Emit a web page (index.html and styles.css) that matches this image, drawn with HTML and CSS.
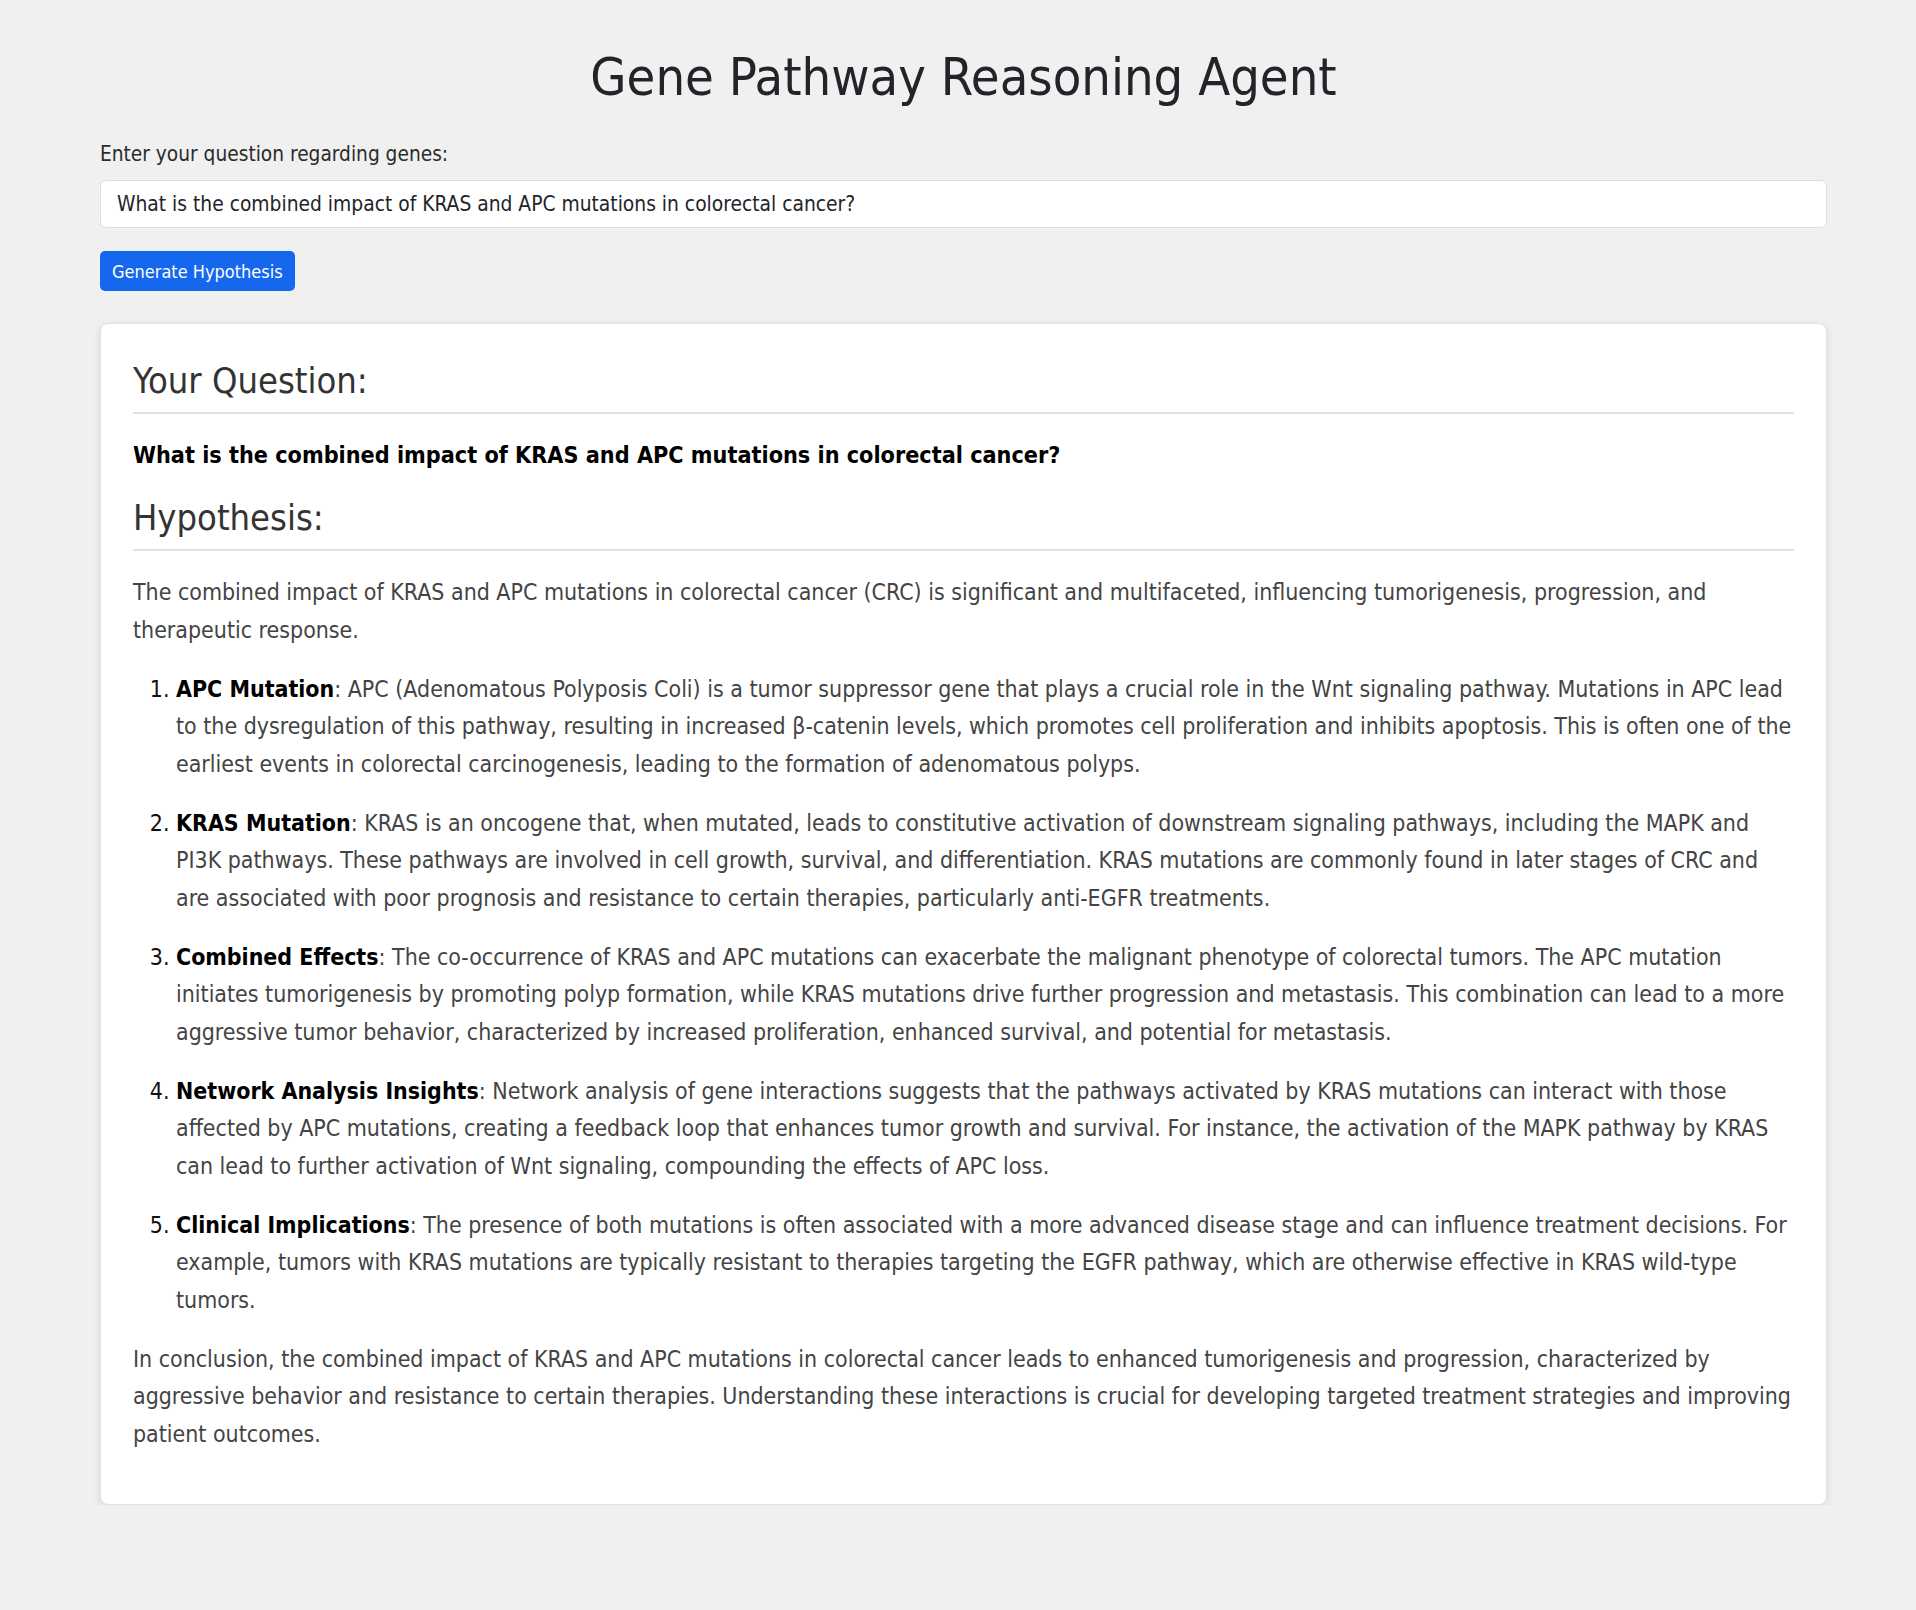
FILE: index.html
```html
<!DOCTYPE html>
<html lang="en">
<head>
<meta charset="utf-8">
<title>Gene Pathway Reasoning Agent</title>
<link rel="stylesheet" href="styles.css">
</head>
<body>
<div class="container">
  <h1 class="title">Gene Pathway Reasoning Agent</h1>
  <form class="ask">
    <label class="ask-label" for="q">Enter your question regarding genes:</label>
    <input class="ask-input" id="q" type="text" value="What is the combined impact of KRAS and APC mutations in colorectal cancer?">
    <button class="ask-btn" type="button">Generate Hypothesis</button>
  </form>
  <section class="result">
    <h2 class="result-heading result-heading-question">Your Question:</h2>
    <p class="question">What is the combined impact of KRAS and APC mutations in colorectal cancer?</p>
    <h2 class="result-heading result-heading-hypothesis">Hypothesis:</h2>
    <div class="hypothesis">
      <p>The combined impact of KRAS and APC mutations in colorectal cancer (CRC) is significant and multifaceted, influencing tumorigenesis, progression, and therapeutic response.</p>
      <ol>
        <li><strong>APC Mutation</strong>: APC (Adenomatous Polyposis Coli) is a tumor suppressor gene that plays a crucial role in the Wnt signaling pathway. Mutations in APC lead to the dysregulation of this pathway, resulting in increased β-catenin levels, which promotes cell proliferation and inhibits apoptosis. This is often one of the earliest events in colorectal carcinogenesis, leading to the formation of adenomatous polyps.</li>
        <li><strong>KRAS Mutation</strong>: KRAS is an oncogene that, when mutated, leads to constitutive activation of downstream signaling pathways, including the MAPK and PI3K pathways. These pathways are involved in cell growth, survival, and differentiation. KRAS mutations are commonly found in later stages of CRC and are associated with poor prognosis and resistance to certain therapies, particularly anti-EGFR treatments.</li>
        <li><strong>Combined Effects</strong>: The co-occurrence of KRAS and APC mutations can exacerbate the malignant phenotype of colorectal tumors. The APC mutation initiates tumorigenesis by promoting polyp formation, while KRAS mutations drive further progression and metastasis. This combination can lead to a more aggressive tumor behavior, characterized by increased proliferation, enhanced survival, and potential for metastasis.</li>
        <li><strong>Network Analysis Insights</strong>: Network analysis of gene interactions suggests that the pathways activated by KRAS mutations can interact with those affected by APC mutations, creating a feedback loop that enhances tumor growth and survival. For instance, the activation of the MAPK pathway by KRAS can lead to further activation of Wnt signaling, compounding the effects of APC loss.</li>
        <li><strong>Clinical Implications</strong>: The presence of both mutations is often associated with a more advanced disease stage and can influence treatment decisions. For example, tumors with KRAS mutations are typically resistant to therapies targeting the EGFR pathway, which are otherwise effective in KRAS wild-type tumors.</li>
      </ol>
      <p class="conclusion">In conclusion, the combined impact of KRAS and APC mutations in colorectal cancer leads to enhanced tumorigenesis and progression, characterized by aggressive behavior and resistance to certain therapies. Understanding these interactions is crucial for developing targeted treatment strategies and improving patient outcomes.</p>
    </div>
  </section>
</div>
</body>
</html>
```

FILE: styles.css
```css
* {
  box-sizing: border-box;
}

html,
body {
  margin: 0;
}

body {
  background: #f0f0f0;
  font-family: "DejaVu Sans Condensed", "DejaVu Sans", sans-serif;
  font-stretch: condensed;
  color: #212529;
  padding: 0 89px 0 100px;
}

.title {
  font-size: 52px;
  font-weight: 400;
  line-height: 62px;
  text-align: center;
  margin: 46px 0 31px;
  color: #212529;
}

.ask {
  margin: 0;
}

.ask-label {
  display: block;
  font-size: 20.7px;
  line-height: 31px;
  color: #2b2b2b;
  margin-bottom: 10px;
}

.ask-input {
  display: block;
  width: 100%;
  height: 48px;
  padding: 0 16px;
  border: 1px solid #dcdde3;
  border-radius: 6px;
  background: #fff;
  font-family: inherit;
  font-stretch: condensed;
  font-size: 20.8px;
  color: #212529;
  margin: 0 0 23px;
  outline: none;
}

.ask-btn {
  display: block;
  height: 40px;
  padding: 0 12px;
  border: none;
  border-radius: 5px;
  background: #1567ee;
  color: #fff;
  font-family: inherit;
  font-stretch: condensed;
  font-size: 18px;
  cursor: pointer;
}

.result {
  margin-top: 32px;
  background: #fff;
  border: 1px solid #e2e2e2;
  border-radius: 8px;
  box-shadow: 0 3px 8px rgba(0, 0, 0, 0.1);
  padding: 34.5px 32px 51px;
}

.result-heading {
  font-size: 36px;
  font-weight: 400;
  line-height: 44px;
  color: #333;
  margin: 0;
  padding-bottom: 9px;
  border-bottom: 2px solid #dee2e6;
}

.result-heading-hypothesis {
  margin-top: 22.8px;
  margin-bottom: 23.3px;
}

.question {
  margin: 22.3px 0 0;
  font-size: 23.2px;
  font-weight: 700;
  line-height: 37.4px;
  color: #000;
}

.hypothesis {
  font-size: 22.95px;
  line-height: 37.4px;
  color: #444;
}

.hypothesis p {
  margin: 0 0 21.8px;
}

.hypothesis p.conclusion {
  margin-bottom: 0;
}

.hypothesis ol {
  margin: 0 0 21.8px;
  padding-left: 43px;
}

.hypothesis li {
  margin-bottom: 21.8px;
}

.hypothesis li:last-child {
  margin-bottom: 0;
}

.hypothesis li::marker {
  color: #111;
}

.hypothesis strong {
  color: #000;
  font-weight: 700;
}
```
